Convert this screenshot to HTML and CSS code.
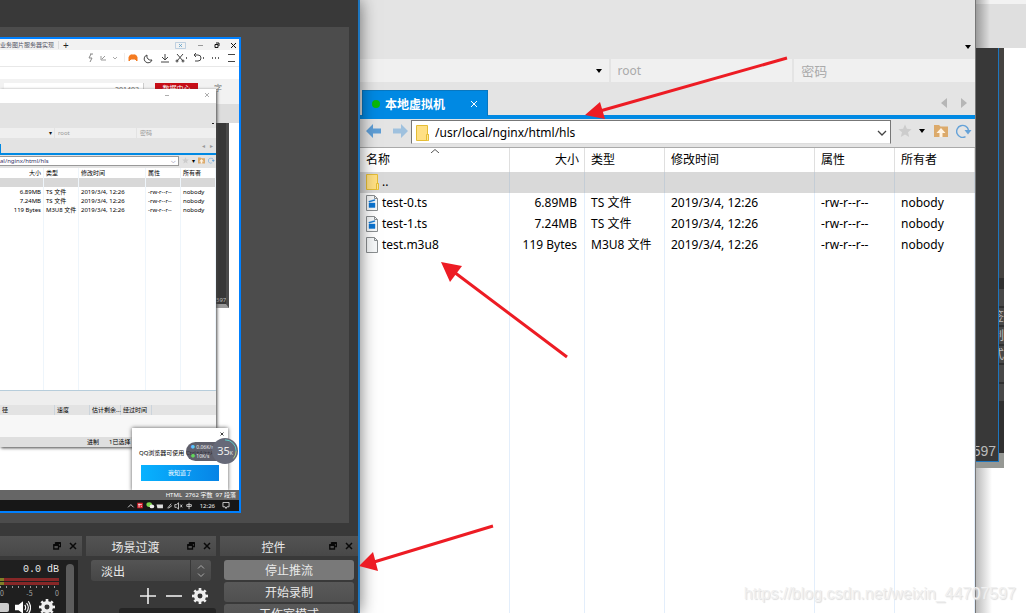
FILE: index.html
```
<!DOCTYPE html>
<html lang="zh-CN">
<head>
<meta charset="utf-8">
<title>直播推流</title>
<link rel="stylesheet" href="styles.css">
</head>
<body>
<svg class="defs" aria-hidden="true">
  <symbol id="float" viewBox="0 0 8 8"><path d="M2.5 2V.8h5v3.7H6M.8 3h4.7v4H.8z" fill="none" stroke="#080808" stroke-width="1.3"/><path d="M.5 3h5M2.5 1h5" stroke="#080808" stroke-width="1.8"/></symbol>
  <symbol id="cross" viewBox="0 0 8 8"><path d="M1 1l6 6M7 1L1 7" fill="none" stroke="currentColor" stroke-width="1.5"/></symbol>
  <symbol id="folder" viewBox="0 0 13 16"><path d="M.5.5h11v9h1v6H.5z" fill="#ffe084" stroke="#e5bd35"/><path d="M10.500 15V9.500h2v6" fill="#ffe896" stroke="#e5bd35"/></symbol>
  <symbol id="file" viewBox="0 0 13 16"><path d="M.5.5h8l3 3v12H.5z" fill="#f7f9fa" stroke="#8b8f91"/><path d="M8.500.5v3h3" fill="none" stroke="#8b8f91"/></symbol>
  <symbol id="clip" viewBox="0 0 13 16"><path d="M.5.5h8l3 3v12H.5z" fill="#f7f9fa" stroke="#8b8f91"/><path d="M8.500.5v3h3" fill="none" stroke="#8b8f91"/><path d="M3 8h6v4.500H3zM2.800 6.200l6-1.700.2 1-6 1.700z" fill="#0b74d1" stroke="#0b74d1" stroke-width=".4"/></symbol>
  <symbol id="up" viewBox="0 0 14 14"><path d="M0 1h5l1.500 1.500H14V13H0z" fill="#dcaa6b"/><path d="M7 4l4.500 5H8.500v4h-3V9h-3z" fill="#fff4e4"/></symbol>
  <symbol id="star" viewBox="0 0 14 14"><path d="M7 .5l1.900 4.300 4.700.4-3.600 3.100 1.200 4.700L7 10.500 2.800 13 4 8.300.4 5.200l4.700-.4z" fill="#ccc"/></symbol>
  <symbol id="refresh" viewBox="0 0 16 14"><path d="M9.500 12.700A6 6 0 1 1 12.500 6" fill="none" stroke="#65a2d8" stroke-width="1.400"/><path d="M8.500 6H15.500L12 10.500z" fill="#65a2d8"/></symbol>
  <symbol id="gear" viewBox="0 0 18 18"><g fill="#eee"><path d="M7.500 0h3v18h-3z"/><path d="M7.500 0h3v18h-3z" transform="rotate(45 9 9)"/><path d="M7.500 0h3v18h-3z" transform="rotate(90 9 9)"/><path d="M7.500 0h3v18h-3z" transform="rotate(135 9 9)"/><circle cx="9" cy="9" r="6.800"/></g><circle cx="9" cy="9" r="2.800" fill="#333"/></symbol>
</svg>

<main class="desktop">
  <section class="obs">
    <div class="preview">
      <div class="capture">
        <div class="mini-tabs"><span class="mini-tab-name">业务图片服务器实现</span><span class="mini-plus">+</span>
          <svg class="mini-caption" viewBox="0 0 78 12"><g fill="none" stroke="#444"><path d="M14.500 3.500h10v6h-10z" stroke="#a9c2d8" stroke-width=".7"/><path d="M18 5l3 3M21 5l-3 3" stroke="#5b9ec9" stroke-width=".8"/><path d="M37 6.500h5" stroke="#999"/><path d="M54 5.500h3v3h-3zM55 4h3v3" stroke="#111"/><path d="M70 4l5 5M75 4l-5 5" stroke="#111"/></g></svg>
        </div>
        <div class="mini-tools">
          <svg class="mini-toolset" viewBox="0 0 152 16"><g fill="none" stroke="#444"><path d="M4 4l-2 4h3l-2 4M3 4h3" stroke="#888"/><path d="M14 6v4h5M15 9l3-3" stroke="#999"/><path d="M26 7l2 2 2-2" stroke="#aaa"/><path d="M37.500 3v9" stroke="#eee"/><path d="M60 5a4 4 0 1 0 5 5 4 4 0 0 1-5-5M78 4v6M75 7l3 3 3-3M74 12h8M90 4l6 7M96 4l-6 7M107 5h4a3 3 0 0 1 0 6h-3M109 3l-2 2 2 2M141 4.500h7M141 11.500h7"/><circle cx="90" cy="11" r="1"/><circle cx="96" cy="11" r="1"/></g><path d="M42 11V7q1-3 4-2 3-1 4 2v4l-2-2h-4z" fill="#f47b20" stroke="#f47b20"/><path d="M99 8h1M116 8h1M125 8h1M128 8h1M131 8h1" stroke="#333" stroke-width="1.300"/></svg>
        </div>
        <div class="mini-page"><span class="mini-count">201403</span><span class="mini-red">数据中心</span><span class="mini-side">字</span></div>
        <div class="mini-band"></div>
        <div class="mini-dark"><span>597</span></div>
        <div class="mini-ftp">
          <div class="mini-title"><svg viewBox="0 0 54 12"><path d="M3 6.500h4M43 4l4 4M47 4l-4 4" fill="none" stroke="#999" stroke-width=".8"/></svg></div>
          <div class="mini-gap"><i></i></div>
          <div class="mini-fields"><span>▾</span><span>root</span><span>密码</span></div>
          <div class="mini-session"><span>◂</span><span>▸</span></div>
          <div class="mini-path"><span class="mini-addr">al/nginx/html/hls<b>⌵</b></span><svg viewBox="0 0 14 14"><use href="#star"/></svg><b>▾</b><svg viewBox="0 0 14 14"><use href="#up"/></svg><svg viewBox="0 0 16 14"><use href="#refresh"/></svg></div>
          <div class="mini-grid">
            <table>
              <thead><tr><th class="num">大小</th><th>类型</th><th>修改时间</th><th>属性</th><th>所有者</th></tr></thead>
              <tbody>
                <tr class="picked"><td></td><td></td><td></td><td></td><td></td></tr>
                <tr><td class="num">6.89MB</td><td>TS 文件</td><td>2019/3/4, 12:26</td><td>-rw-r--r--</td><td>nobody</td></tr>
                <tr><td class="num">7.24MB</td><td>TS 文件</td><td>2019/3/4, 12:26</td><td>-rw-r--r--</td><td>nobody</td></tr>
                <tr><td class="num">119 Bytes</td><td>M3U8 文件</td><td>2019/3/4, 12:26</td><td>-rw-r--r--</td><td>nobody</td></tr>
                <tr class="rest"><td></td><td></td><td></td><td></td><td></td></tr>
              </tbody>
            </table>
          </div>
          <div class="mini-foot"></div>
          <div class="mini-queue"><span>径</span><span>速度</span><span>估计剩余...</span><span>经过时间</span><span></span></div>
          <div class="mini-blank"></div>
          <div class="mini-status"><span>进制</span><span>1已选择</span></div>
        </div>
        <div class="mini-popup"><svg viewBox="0 0 8 8"><use href="#cross"/></svg><p>QQ浏览器可使用 Ctrl+Alt+A 截图</p><button type="button">我知道了</button></div>
        <div class="mini-net"><span><b class="c-up">●</b> 0.06K/s</span><span><b class="c-down">●</b> 10K/s</span></div>
        <div class="mini-ball"><svg viewBox="0 0 28 28"><path d="M14 2a12 12 0 0 1 12 12" fill="none" stroke="#5ed3cd"/><path d="M26 14a12 12 0 0 1-3 8" fill="none" stroke="#b6d38b"/></svg>35<small>K</small></div>
        <div class="mini-wordbar">HTML &nbsp;2762 字数 &nbsp;97 段落</div>
        <div class="mini-taskbar">
          <svg viewBox="0 0 76 12"><path d="M1 8l3-3 3 3" fill="none" stroke="#ddd"/><path d="M11 3h6v6h-6z" fill="#d9232e"/><path d="M12 5h4M13 4v4M15 7h1" stroke="#fff" stroke-width=".8"/><ellipse cx="24" cy="5" rx="3" ry="2.500" fill="#7bd44a"/><ellipse cx="27" cy="7" rx="2.500" ry="2" fill="#eee"/><path d="M32 5h7v4h-6z" fill="#ddd"/><path d="M44 9l4-5M45 9l4-3M52 5v3h2l2 2V3l-2 2zM58 5l2 3M60 5l-2 3M65 5h5v2h-5zM67.500 3v7" fill="none" stroke="#ddd" stroke-width=".9"/></svg>
          <span>12:26</span>
          <svg class="mini-note" viewBox="0 0 8 8"><path d="M.5.5h7v5H5l-1 2-1-2H.5z" fill="none" stroke="#ddd"/></svg>
        </div>
      </div>
    </div>

    <div class="docks">
      <div class="dock mixer">
        <div class="dock-title"><span></span><svg><use href="#float"/></svg><svg><use href="#cross"/></svg></div>
        <div class="mixer-body">
          <div class="mixer-main">
            <div class="level">0.0 dB</div>
            <div class="meter"></div><div class="meter"></div>
            <div class="scale"><span>0</span><span>-5</span><span>0</span></div>
            <div class="mix-tools"><i class="thumb"></i><svg class="speaker" viewBox="0 0 18 16"><path d="M0 5h4l5-4v14l-5-4H0z" fill="#fff"/><path d="M11 5q2 3 0 6M13 3q4 5 0 10M15 1q5 7 0 14" fill="none" stroke="#fff" stroke-width="1.300"/></svg><svg class="cog" viewBox="0 0 18 18"><use href="#gear"/></svg></div>
          </div>
          <i class="mix-scroll"></i>
        </div>
      </div>
      <div class="dock scenes">
        <div class="dock-title"><span>场景过渡</span><svg><use href="#float"/></svg><svg><use href="#cross"/></svg></div>
        <div class="transition"><select aria-label="场景过渡"><option>淡出</option></select><svg viewBox="0 0 8 14"><path d="M1 4.500l3-3 3 3M1 9.500l3 3 3-3" fill="none" stroke="#aaa"/></svg></div>
        <div class="scene-tools">
          <button type="button" aria-label="添加"><svg viewBox="0 0 16 16"><path d="M8 0v16M0 8h16" stroke="#eee" stroke-width="1.600"/></svg></button>
          <button type="button" aria-label="移除"><svg viewBox="0 0 16 16"><path d="M0 8h16" stroke="#eee" stroke-width="1.600"/></svg></button>
          <button type="button" aria-label="设置"><svg viewBox="0 0 18 18"><use href="#gear"/></svg></button>
        </div>
        <div class="scene-foot"></div>
      </div>
      <div class="dock controls">
        <div class="dock-title"><span>控件</span><svg><use href="#float"/></svg><svg><use href="#cross"/></svg></div>
        <div class="control-list">
          <button type="button" class="active">停止推流</button>
          <button type="button">开始录制</button>
          <button type="button">工作室模式</button>
        </div>
      </div>
    </div>
  </section>

  <section class="ftp">
    <div class="ribbon"><i class="caret"></i></div>
    <div class="login">
      <div class="field host"><i class="caret"></i></div>
      <input class="field" type="text" placeholder="root" aria-label="用户名">
      <input class="field secret" type="password" placeholder="密码" aria-label="密码">
    </div>
    <div class="sessions">
      <div class="session"><i class="dot"></i><span>本地虚拟机</span><button type="button" aria-label="关闭"><svg viewBox="0 0 8 8"><path d="M1 1l6 6M7 1L1 7" stroke="#fff" fill="none"/></svg></button></div>
      <svg class="pager" viewBox="0 0 26 10"><path d="M6 0v10L0 5zM20 0v10l6-5z" fill="#b6b6b6"/></svg>
    </div>
    <div class="pathbar">
      <svg class="nav" viewBox="0 0 16 14"><path d="M0 7l7-7v4.500h8v5H7V14z" fill="#5f9ed5"/></svg>
      <svg class="nav" viewBox="0 0 16 14"><path d="M16 7L9 0v4.500H1v5h8V14z" fill="#9fc1de"/></svg>
      <div class="address"><svg class="ico"><use href="#folder"/></svg><input type="text" value="/usr/local/nginx/html/hls" aria-label="路径"><svg class="chev" viewBox="0 0 10 6"><path d="M1 1l4 4 4-4" fill="none" stroke="#444" stroke-width="1.300"/></svg></div>
      <div class="path-tools"><svg class="t14"><use href="#star"/></svg><i class="caret"></i><svg class="t14"><use href="#up"/></svg><svg class="t16"><use href="#refresh"/></svg></div>
    </div>
    <div class="listing">
      <table class="files">
        <colgroup><col class="w-name"><col class="w-size"><col class="w-type"><col class="w-time"><col class="w-attr"><col class="w-owner"></colgroup>
        <thead><tr><th class="sorted">名称<svg viewBox="0 0 8 4"><path d="M0 4l4-3.500L8 4" fill="none" stroke="#555"/></svg></th><th class="num">大小</th><th>类型</th><th>修改时间</th><th>属性</th><th>所有者</th></tr></thead>
        <tbody>
          <tr class="picked"><td><div class="name"><svg class="ico"><use href="#folder"/></svg>..</div></td><td></td><td></td><td></td><td></td><td></td></tr>
          <tr><td><div class="name"><svg class="ico"><use href="#clip"/></svg>test-0.ts</div></td><td class="num">6.89MB</td><td>TS 文件</td><td>2019/3/4, 12:26</td><td>-rw-r--r--</td><td>nobody</td></tr>
          <tr><td><div class="name"><svg class="ico"><use href="#clip"/></svg>test-1.ts</div></td><td class="num">7.24MB</td><td>TS 文件</td><td>2019/3/4, 12:26</td><td>-rw-r--r--</td><td>nobody</td></tr>
          <tr><td><div class="name"><svg class="ico"><use href="#file"/></svg>test.m3u8</div></td><td class="num">119 Bytes</td><td>M3U8 文件</td><td>2019/3/4, 12:26</td><td>-rw-r--r--</td><td>nobody</td></tr>
          <tr class="rest"><td></td><td></td><td></td><td></td><td></td><td></td></tr>
        </tbody>
      </table>
    </div>
  </section>

  <section class="behind">
    <div class="behind-top"></div>
    <div class="behind-obs">
      <div class="behind-main"><span>597</span></div>
      <div class="behind-side"><i></i><i>签</i><i>制</i><i>式</i><i></i><i></i></div>
    </div>
  </section>

  <svg class="marks" viewBox="0 0 1026 613" aria-hidden="true">
    <g stroke="#ed1c24" stroke-width="3"><path d="M787 58L600 111M567 357L454 272M493 526L374 562"/></g>
    <path d="M585 115l15-13 5 17zM441 262l21 4-12 16zM359 566l14-14 5 19z" fill="#ed1c24"/>
  </svg>
  <div class="watermark">https://blog.csdn.net/weixin_44707597</div>
</main>
</body>
</html>
```
FILE: styles.css
```
* { box-sizing: border-box; }
body { margin: 0; background: #fff; font-family: "Noto Sans", "Noto Sans CJK SC", sans-serif; font-size: 12px; color: #000; }
button, input, select { font: inherit; color: inherit; margin: 0; padding: 0; border: 0; background: none; border-radius: 0; }
i, b { font-style: normal; font-weight: normal; }
svg { display: block; flex: none; }
.defs { position: absolute; width: 0; height: 0; }
.desktop { position: relative; display: flex; height: 100vh; overflow: hidden; }
.caret { width: 0; height: 0; border: 3px solid transparent; border-top: 4px solid #000; border-bottom: 0; }
.num { text-align: right; }

/* streaming studio window */
.obs { flex: none; width: 360px; position: relative; z-index: 2; display: flex; flex-direction: column; background: #393939; border-right: 2px solid #1d76bf; box-shadow: 0 0 16px rgba(0,0,0,.55); padding-top: 27px; }
.preview { flex: 1; margin-right: 9px; background: #4c4c4c; padding: 10px 0; }
.capture { position: relative; width: 241px; height: 476px; border: 2px solid #0080ff; border-left: 0; background: #fff; overflow: hidden; font-size: 6px; line-height: 8px; }
.docks { flex: none; height: 77px; margin-top: 13px; display: flex; gap: 4px; overflow: hidden; color: #e8e8e8; font-family: "Noto Sans CJK SC", sans-serif; font-size: 12px; }
.dock-title { height: 20px; background: linear-gradient(#535353, #484848); display: flex; align-items: center; gap: 8px; padding-right: 5px; color: #e8e8e8; }
.dock-title span { flex: 1; text-align: center; padding-left: 6px; }
.dock-title svg { width: 8px; height: 8px; color: #0a0a0a; }
.mixer { width: 82px; flex: none; }
.scenes { width: 130px; flex: none; }
.controls { flex: 1; }
.mixer-body { margin: 4px 4px 0 0; height: 53px; background: #1f1f1f; display: flex; gap: 7px; }
.mixer-main { width: 59px; }
.level { height: 18px; line-height: 20px; text-align: right; font-family: "Liberation Mono", monospace; font-size: 10px; }
.meter { height: 3px; margin-bottom: 1px; background: linear-gradient(90deg, #807f27 4px, #872727 4px); }
.scale { height: 12px; padding-top: 3px; line-height: 8px; font-size: 7px; display: flex; justify-content: space-between; background: repeating-linear-gradient(90deg, #999 0 1px, transparent 1px 6px) 0 0 / 100% 2px no-repeat; color: #aaa; }
.mix-tools { display: flex; align-items: center; gap: 8px; height: 18px; }
.thumb { width: 9px; height: 9px; background: #ccc; border-radius: 0 2px 2px 0; margin-right: -2px; }
.speaker { width: 16px; height: 15px; }
.cog { width: 16px; height: 16px; }
.mix-scroll { width: 8px; margin-top: 4px; border-radius: 4px 4px 0 0; background: #5c5c5c; }
.transition { margin: 4px 5px 0; height: 21px; border-radius: 3px; background: linear-gradient(#545454, #464646); display: flex; align-items: center; padding-right: 6px; }
.transition select { flex: 1; height: 21px; appearance: none; padding-left: 10px; border-right: 1px solid #383838; margin-right: 6px; }
.transition svg { width: 8px; height: 14px; }
.scene-tools { display: flex; justify-content: flex-end; gap: 10px; padding: 7px 8px 0 0; }
.scene-tools svg { width: 16px; height: 16px; }
.scene-foot { height: 8px; margin: 4px 0 0 33px; background: #252525; border-radius: 3px; }
.control-list { padding: 4px 4px 0; display: flex; flex-direction: column; gap: 2px; }
.control-list button { height: 20px; flex: none; line-height: 20px; border-radius: 3px; background: linear-gradient(#595959, #505050); }
.control-list .active { background: #797979; }

/* file transfer window */
.ftp { flex: 1; min-width: 0; display: flex; flex-direction: column; background: #e4e4e4; border-right: 1px solid #777; }
.ribbon { height: 59px; display: flex; justify-content: flex-end; align-items: flex-end; padding: 0 4px 10px; }
.login { height: 23px; display: grid; grid-template-columns: 249fr 182fr 181fr; gap: 2px; }
.field { min-width: 0; width: 100%; background: #f0f0f0; padding: 0 7px; }
.field::placeholder { color: #aaa; opacity: 1; }
.secret { font-size: 13px; }
.host { display: flex; justify-content: flex-end; align-items: center; }
.sessions { margin-top: 8px; height: 29px; border-bottom: 4px solid #0089e3; padding: 0 8px 0 2px; display: flex; justify-content: space-between; align-items: flex-start; }
.session { width: 126px; height: 26px; padding: 0 9px; display: flex; align-items: center; gap: 5px; background: #0089e3; border: 1px solid #0877c0; border-bottom: 0; color: #fff; font: bold 12px "Noto Sans CJK SC", sans-serif; }
.session span { flex: 1; }
.session button { width: 8px; }
.dot { width: 8px; height: 8px; border-radius: 50%; background: #0ab80a; }
.pager { width: 26px; height: 10px; margin-top: 8px; }
.pathbar { height: 29px; border-bottom: 1px solid #aaa; display: flex; align-items: flex-start; padding: 1px 3px 0 6px; gap: 10px; }
.nav { width: 16px; height: 14px; margin-top: 4px; }
.nav + .nav { margin-right: -7px; }
.address { flex: 1; height: 24px; display: flex; align-items: center; background: #fff; border: 1px solid #777; border-bottom-color: #ddd; padding: 1px 3px 0 4px; gap: 6px; }
.address input { flex: 1; min-width: 0; height: 20px; }
.ico { width: 13px; height: 16px; }
.chev { width: 10px; height: 6px; }
.path-tools { display: flex; align-items: center; gap: 8px; height: 22px; margin-left: -3px; }
.path-tools .caret { margin: 0 1px 0 -1px; }
.t14 { width: 14px; height: 14px; }
.t16 { width: 16px; height: 14px; }
.listing { flex: 1; min-height: 0; background: #fff; padding-right: 1px; }
.files { width: 100%; height: 100%; table-layout: fixed; border-collapse: separate; border-spacing: 0; }
.w-name { width: 150px; } .w-size { width: 75px; } .w-type { width: 80px; } .w-time { width: 150px; } .w-attr { width: 80px; } .w-owner { width: 80px; }
.files th { height: 24px; padding: 0 6px; font-weight: normal; text-align: left; border-right: 1px solid #dfdfdf; position: relative; line-height: 18px; }
.files th.num { text-align: right; padding-right: 5px; }
.sorted svg { position: absolute; left: 71px; top: 1px; width: 8px; height: 4px; }
.files td { height: 21px; padding: 0 6px 2px; line-height: 18px; white-space: nowrap; border-right: 1px solid #e3eefb; }
.files td.num { padding-right: 7px; }
.files .picked td { background: #d9d9d9; border-color: #c4cdd6; }
.files .rest td { height: auto; }
.name { display: flex; align-items: center; gap: 3px; }

/* windows further back */
.behind { flex: none; width: 50px; display: flex; flex-direction: column; background: linear-gradient(90deg, #bbb, #fff 16px); }
.behind-top { height: 48px; background: linear-gradient(90deg, rgba(0,0,0,.3), transparent 14px), linear-gradient(#f2f2f2 4px, #dfdfdf 4px); }
.behind-obs { width: 28px; height: 420px; display: flex; background: linear-gradient(#383838 405px, #969894 405px); }
.behind-main { width: 23px; height: 414px; background: #383838; border: solid #1d76bf; border-width: 0 1px 1px 0; display: flex; align-items: flex-end; justify-content: flex-end; padding: 0 2px 1px; color: #bbb; overflow: hidden; font: 14px/18px "Liberation Sans", sans-serif; }
.behind-side { flex: 1; height: 405px; background: linear-gradient(#454341 230px, #303030 230px); padding-top: 241px; overflow: hidden; display: flex; flex-direction: column; gap: 2px; color: #bbb; font-size: 12px; }
.behind-side i { height: 17px; line-height: 17px; background: #484848; direction: rtl; }

/* annotations */
.marks { position: absolute; z-index: 3; left: 0; top: 0; width: 1026px; height: 613px; }
.watermark { position: absolute; z-index: 4; right: 10px; bottom: 8px; font: 16px/22px "Liberation Sans", sans-serif; color: #f0f0f0; text-shadow: 1px 1px 1px #ddd; }

/* captured desktop shown in the preview */
.mini-tabs { height: 11px; background: #f2f2f2; display: flex; align-items: center; color: #556; overflow: hidden; }
.mini-tab-name { width: 59px; white-space: nowrap; overflow: hidden; border-right: 1px solid #ddd; }
.mini-plus { flex: 1; padding-left: 4px; font-size: 10px; color: #222; }
.mini-caption { width: 78px; height: 12px; }
.mini-tools { height: 17px; display: flex; justify-content: flex-end; border-bottom: 1px solid #e8e8e8; }
.mini-toolset { width: 152px; height: 16px; }
.mini-page { height: 37px; padding: 16px 17px 0 0; background: linear-gradient(#fff 12px, #f2f2f2 12px); display: flex; gap: 11px; justify-content: flex-end; white-space: nowrap; }
.mini-count { width: 140px; height: 14px; background: #fff; border-right: 1px solid #ccc; text-align: right; font-size: 7px; padding: 3px 4px 0 0; color: #666; }
.mini-red { width: 43px; height: 14px; margin-right: 5px; background: #c70d17; color: #fff; text-align: center; font-size: 7px; padding-top: 2px; }
.mini-side { width: 8px; font-size: 8px; line-height: 10px; text-align: center; color: #777; }
.mini-band { height: 19px; background: #ddd; }
.mini-dark { margin-left: 216px; width: 13px; height: 185px; background: #383838; border-right: 3px solid #4a4a4a; border-bottom: 4px solid #999; display: flex; align-items: flex-end; color: #bbb; overflow: hidden; }
.mini-ftp { position: absolute; left: 0; top: 50px; width: 216px; background: #e3e3e3; box-shadow: 1px 1px 3px #444; }
.mini-title { height: 14px; background: #fff; display: flex; justify-content: flex-end; }
.mini-title svg { width: 54px; height: 12px; }
.mini-gap { height: 25px; display: flex; align-items: flex-end; justify-content: flex-end; padding: 0 2px 4px; }
.mini-gap i { width: 2px; height: 1px; background: #222; }
.mini-fields { height: 10px; display: grid; grid-template-columns: 54px 81px 1fr; gap: 1px; color: #999; }
.mini-fields span { background: #efefef; padding-left: 3px; line-height: 10px; }
.mini-fields span:first-child { text-align: right; padding-right: 2px; color: #111; }
.mini-session { height: 17px; border-bottom: 2px solid #0089e3; display: flex; gap: 5px; justify-content: flex-end; align-items: center; padding-right: 3px; color: #999; background: linear-gradient(#0089e3, #0089e3) 0 6px / 1px 100% no-repeat; }
.mini-path { height: 13px; display: flex; align-items: center; gap: 3px; padding: 0 1px 2px 0; }
.mini-addr { flex: 1; height: 10px; background: #fff; border: 1px solid #999; border-left: 0; display: flex; justify-content: space-between; padding-right: 2px; color: #336; }
.mini-path svg { width: 7px; height: 7px; }
.mini-grid { height: 223px; background: #fff; border-bottom: 1px solid #b7cddb; }
.mini-grid table { width: 100%; height: 100%; table-layout: fixed; border-spacing: 0; }
.mini-grid th, .mini-grid td { height: 9px; padding: 0 2px; line-height: 8px; font-weight: normal; text-align: left; white-space: nowrap; border-right: 1px solid #eef5fb; }
.mini-grid th { height: 10px; }
.mini-grid .num { text-align: right; }
.mini-grid th:nth-child(1) { width: 44px; } .mini-grid th:nth-child(2) { width: 35px; } .mini-grid th:nth-child(3) { width: 67px; } .mini-grid th:nth-child(4) { width: 35px; }
.mini-grid .picked td { background: #d8d8d8; }
.mini-grid .rest td { height: auto; }
.mini-foot { height: 14px; background: #eee; }
.mini-queue { height: 10px; display: grid; grid-template-columns: 55px 35px 31px 31px 1fr; white-space: nowrap; }
.mini-queue span { border-right: 1px solid #cbd4dc; padding: 1px 0 0 2px; }
.mini-queue span:last-child { border: 0; }
.mini-blank { height: 22px; background: #f7f7f7; }
.mini-status { height: 10px; background: #dfdfdf; display: flex; gap: 10px; padding: 1px 0 0 87px; }
.mini-popup { position: absolute; left: 132px; top: 389px; width: 96px; height: 63px; background: #fff; box-shadow: 0 0 4px #555; padding: 4px 9px; }
.mini-popup svg { width: 4px; height: 4px; margin-left: auto; margin-right: -5px; }
.mini-popup p { margin: 13px -10px 8px -2px; white-space: nowrap; line-height: 8px; }
.mini-popup button { display: block; width: 100%; height: 16px; color: #fff; background: linear-gradient(90deg, #08b2ff, #0784e6); }
.mini-net { position: absolute; left: 186px; top: 403px; width: 40px; height: 19px; border-radius: 10px; background: rgba(60,60,75,.82); color: #eee; font-size: 5px; padding: 1px 5px; display: grid; }
.mini-net b { font-size: 4px; }
.c-up { color: #59c4ff; } .c-down { color: #63d65a; }
.mini-ball { position: absolute; left: 212px; top: 399px; width: 26px; height: 26px; border-radius: 50%; background: #666978; color: #eee; font-size: 11px; line-height: 26px; text-align: center; }
.mini-ball svg { position: absolute; left: 0; top: 0; width: 26px; height: 26px; }
.mini-ball small { font-size: 5px; }
.mini-wordbar { position: absolute; left: 0; right: 0; bottom: 11px; height: 10px; background: #666; color: #fff; text-align: right; padding: 1px 3px; }
.mini-taskbar { position: absolute; left: 0; right: 0; bottom: 0; height: 11px; background: #171717; color: #eee; display: flex; justify-content: flex-end; align-items: center; padding-right: 9px; }
.mini-taskbar svg { width: 76px; height: 11px; }
.mini-taskbar .mini-note { width: 8px; height: 7px; margin-left: 7px; }
```
